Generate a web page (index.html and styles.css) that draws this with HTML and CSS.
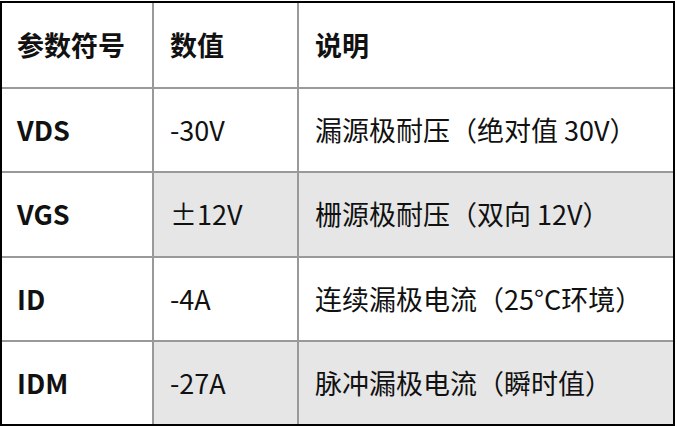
FILE: index.html
```html
<!DOCTYPE html>
<html lang="zh-CN">
<head>
<meta charset="utf-8">
<title>参数表</title>
<link rel="stylesheet" href="styles.css">
</head>
<body>
<table class="spec">
  <thead>
    <tr>
      <th class="c1">参数符号</th>
      <th class="c2">数值</th>
      <th class="c3">说明</th>
    </tr>
  </thead>
  <tbody>
    <tr>
      <th class="sym">VDS</th>
      <td>-30V</td>
      <td class="desc">漏源极耐压（绝对值 30V）</td>
    </tr>
    <tr class="alt">
      <th class="sym">VGS</th>
      <td>±12V</td>
      <td class="desc">栅源极耐压（双向 12V）</td>
    </tr>
    <tr>
      <th class="sym">ID</th>
      <td>-4A</td>
      <td class="desc">连续漏极电流（25°C环境）</td>
    </tr>
    <tr class="alt">
      <th class="sym">IDM</th>
      <td>-27A</td>
      <td class="desc">脉冲漏极电流（瞬时值）</td>
    </tr>
  </tbody>
</table>
</body>
</html>
```
FILE: styles.css
```css
html, body {
  margin: 0;
  padding: 0;
  background: #ffffff;
}

.spec {
  margin-top: 1px;
  width: 675px;
  box-sizing: border-box;
  border: 2px solid #000;
  border-collapse: separate;
  border-spacing: 0;
  table-layout: fixed;
  font-family: "Noto Sans CJK SC", "Noto Sans", sans-serif;
  font-size: 27px;
  color: #111;
}

.spec th,
.spec td {
  text-align: left;
  vertical-align: middle;
  padding: 0 0 0 15px;
  border-right: 2px solid #999;
  border-bottom: 2px solid #999;
  line-height: 38px;
  white-space: nowrap;
}

.spec th:last-child,
.spec td:last-child {
  border-right: none;
}

.spec tbody tr:last-child th,
.spec tbody tr:last-child td {
  border-bottom: none;
}

.spec thead th {
  height: 84px;
  font-weight: 700;
}

.spec tbody th,
.spec tbody td {
  height: 82.3px;
}

.spec .sym {
  font-weight: 700;
}

.spec td {
  font-weight: 400;
}

.spec .c1 { width: 135px; }
.spec .c2 { width: 127px; }

.spec thead .c2,
.spec tbody td:nth-child(2) {
  padding-left: 16px;
}

.spec .c3,
.spec .desc {
  padding-left: 16px;
}

.spec tr.alt td {
  background: #e6e6e6;
}
```
